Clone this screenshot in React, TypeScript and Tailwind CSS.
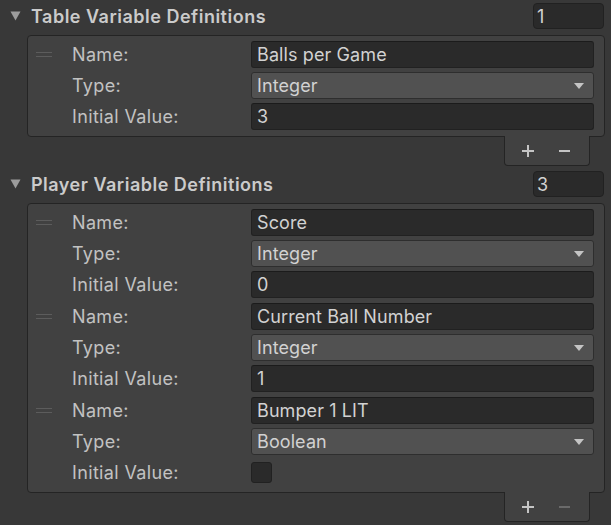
import React from "react";

type Variable = {
  name: string;
  type: string;
  value: string | boolean;
};

const tableVars: Variable[] = [{ name: "Balls per Game", type: "Integer", value: "3" }];

const playerVars: Variable[] = [
  { name: "Score", type: "Integer", value: "0" },
  { name: "Current Ball Number", type: "Integer", value: "1" },
  { name: "Bumper 1 LIT", type: "Boolean", value: false },
];

function Foldout() {
  return (
    <svg width="11" height="10" viewBox="0 0 11 10" className="shrink-0">
      <path d="M0.5 0.5 L10.5 0.5 L5.5 9.5 Z" fill="#9c9c9c" />
    </svg>
  );
}

function Handle() {
  return (
    <div className="w-[16px] flex flex-col gap-[3px]">
      <div className="h-px bg-[#5c5c5c]" />
      <div className="h-px bg-[#5c5c5c]" />
    </div>
  );
}

function Row({ label, children, handle }: { label: string; children: React.ReactNode; handle?: boolean }) {
  return (
    <div className="h-[31px] flex items-center">
      <div className="w-[44px] pl-[8px] flex items-center">{handle && <Handle />}</div>
      <div className="w-[179px] text-[18px] text-[#c2c2c2] tracking-[0.35px]">{label}</div>
      <div className="flex-1 mr-[10px]">{children}</div>
    </div>
  );
}

function TextField({ value }: { value: string }) {
  return (
    <div className="h-[27px] rounded-[3px] bg-[#2a2a2a] border border-[#212121] border-t-[#1b1b1b] pl-[5px] flex items-center text-[18px] text-[#d2d2d2] tracking-[0.1px]">
      {value}
    </div>
  );
}

function Dropdown({ value }: { value: string }) {
  return (
    <div className="h-[27px] rounded-[3px] bg-[#515151] border border-[#2e2e2e] pl-[5px] pr-[9px] flex items-center text-[18px] text-[#d2d2d2] tracking-[0.1px]">
      <span className="flex-1">{value}</span>
      <svg width="10" height="6" viewBox="0 0 10 6">
        <path d="M0 0 L10 0 L5 6 Z" fill="#c4c4c4" />
      </svg>
    </div>
  );
}

function Checkbox() {
  return <div className="w-[21px] h-[21px] rounded-[3px] bg-[#2a2a2a] border border-[#212121]" />;
}

function Section({ title, vars, minusActive }: { title: string; vars: Variable[]; minusActive: boolean }) {
  return (
    <div>
      <div className="h-[26px] flex items-center">
        <div className="pl-[10px] w-[31px]">
          <Foldout />
        </div>
        <div className="text-[18px] font-semibold text-[#cbcbcb] tracking-[0.5px] pt-px">{title}</div>
        <div className="ml-auto mr-[7px] w-[71px] h-[26px] rounded-[4px] bg-[#2a2a2a] border border-[#212121] pl-[3px] flex items-center text-[18px] text-[#d2d2d2]">
          {vars.length}
        </div>
      </div>
      <div className="ml-[27px] mr-[6px] mt-[6px] rounded-[4px] border border-[#242424] bg-[#414141] pt-[3px] pb-[4px] flex flex-col gap-[1px]">
        {vars.map((v) => (
          <div key={v.name}>
            <Row label="Name:" handle>
              <TextField value={v.name} />
            </Row>
            <Row label="Type:">
              <Dropdown value={v.type} />
            </Row>
            <Row label="Initial Value:">
              {typeof v.value === "boolean" ? <Checkbox /> : <TextField value={v.value} />}
            </Row>
          </div>
        ))}
      </div>
      <div className="ml-auto mr-[21px] -mt-px w-[86px] h-[30px] bg-[#414141] border border-t-0 border-[#242424] rounded-b-[4px] flex items-center justify-center gap-[23px] pr-[3px]">
        <svg width="14" height="14" viewBox="0 0 14 14">
          <path d="M7 1 V13 M1 7 H13" stroke="#c4c4c4" strokeWidth="2" />
        </svg>
        <svg width="13" height="14" viewBox="0 0 13 14">
          <path d="M1 7 H12" stroke={minusActive ? "#c4c4c4" : "#6a6a6a"} strokeWidth="2" />
        </svg>
      </div>
    </div>
  );
}

export default function App() {
  return (
    <div className="w-[611px] h-[525px] bg-[#383838] pt-[3px] overflow-hidden font-['Inter','Noto_Sans',sans-serif]">
      <Section title="Table Variable Definitions" vars={tableVars} minusActive />
      <div className="mt-[5px]">
        <Section title="Player Variable Definitions" vars={playerVars} minusActive={false} />
      </div>
    </div>
  );
}
